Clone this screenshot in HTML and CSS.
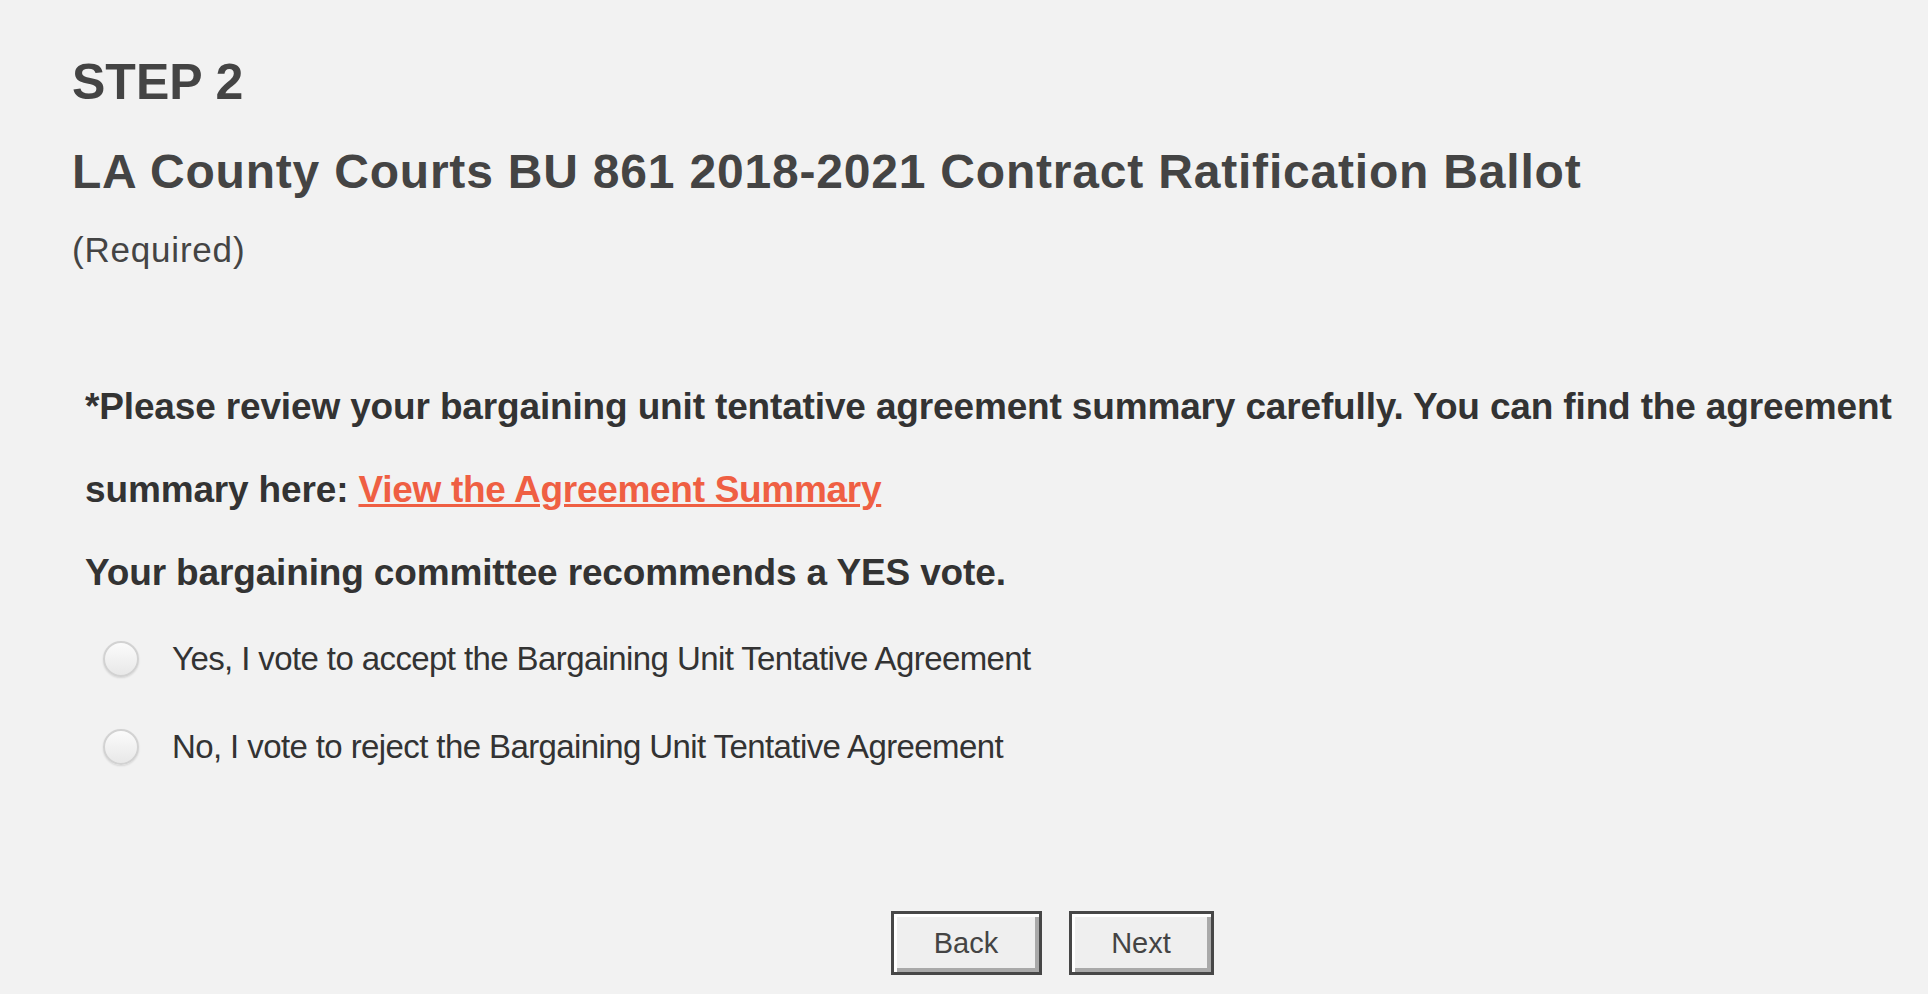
FILE: index.html
```html
<!DOCTYPE html>
<html>
<head>
<meta charset="utf-8">
<link rel="stylesheet" href="styles.css">
</head>
<body>
<div class="page">
  <div class="head">
    <div class="step">STEP 2</div>
    <div class="title">LA County Courts BU 861 2018-2021 Contract Ratification Ballot</div>
    <div class="required">(Required)</div>
  </div>
  <div class="question">
    <p class="prompt">*Please review your bargaining unit tentative agreement summary carefully. You can find the agreement summary here: <a class="link" href="#">View the Agreement Summary</a></p>
    <p class="prompt">Your bargaining committee recommends a YES vote.</p>
    <div class="options">
      <label class="option"><input class="radio" type="radio" name="vote"><span>Yes, I vote to accept the Bargaining Unit Tentative Agreement</span></label>
      <label class="option"><input class="radio" type="radio" name="vote"><span>No, I vote to reject the Bargaining Unit Tentative Agreement</span></label>
    </div>
  </div>
  <div class="nav">
    <button class="btn btn-back" type="button">Back</button>
    <button class="btn btn-next" type="button">Next</button>
  </div>
</div>
</body>
</html>
```
FILE: styles.css
```css
html, body {
  margin: 0;
  padding: 0;
  background: #f2f2f2;
}
body {
  font-family: "Liberation Sans", Arial, Helvetica, sans-serif;
  color: #444;
}
.page {
  display: flex;
  flex-direction: column;
}
.head {
  padding-left: 72px;
  padding-top: 52px;
}
.step {
  font-size: 50px;
  font-weight: bold;
  line-height: 60px;
  color: #444;
}
.title {
  margin-top: 30px;
  font-size: 48px;
  letter-spacing: 0.8px;
  font-weight: bold;
  line-height: 60px;
  color: #444;
}
.required {
  margin-top: 26px;
  font-size: 35px;
  letter-spacing: 0.8px;
  line-height: 44px;
  color: #444;
}
.question {
  padding-left: 85px;
  margin-top: 93px;
}
.prompt {
  margin: 0;
  font-size: 37px;
  letter-spacing: -0.15px;
  font-weight: bold;
  line-height: 83px;
  color: #333;
}
.link {
  color: #ef5f43;
  letter-spacing: -0.3px;
  text-decoration: underline;
  text-decoration-thickness: 3px;
  text-underline-offset: 2px;
}
.options {
  display: flex;
  flex-direction: column;
  margin-top: 1px;
}
.option {
  display: flex;
  align-items: center;
  height: 88px;
  font-size: 33px;
  letter-spacing: -0.6px;
  color: #333;
}
.radio {
  appearance: none;
  -webkit-appearance: none;
  width: 36px;
  height: 36px;
  margin: 0 33px 0 18px;
  border-radius: 50%;
  border: 2px solid #d2d2d2;
  background: linear-gradient(#fbfbfb, #e8e8e8);
  box-shadow: 0 1px 2px rgba(0,0,0,0.12);
  box-sizing: border-box;
}
.nav {
  display: flex;
  justify-content: center;
  gap: 27px;
  margin-top: 120px;
  padding-left: 176px;
}
.btn {
  height: 64px;
  padding: 0;
  font-family: "Liberation Sans", Arial, Helvetica, sans-serif;
  font-size: 29px;
  color: #444;
  background: #efefef;
  border: 3px solid #474747;
  box-shadow: inset 3px 3px 0 #ffffff, inset -4px -4px 0 #a9a9a9;
}
.btn-back { width: 151px; }
.btn-next { width: 145px; }
```
